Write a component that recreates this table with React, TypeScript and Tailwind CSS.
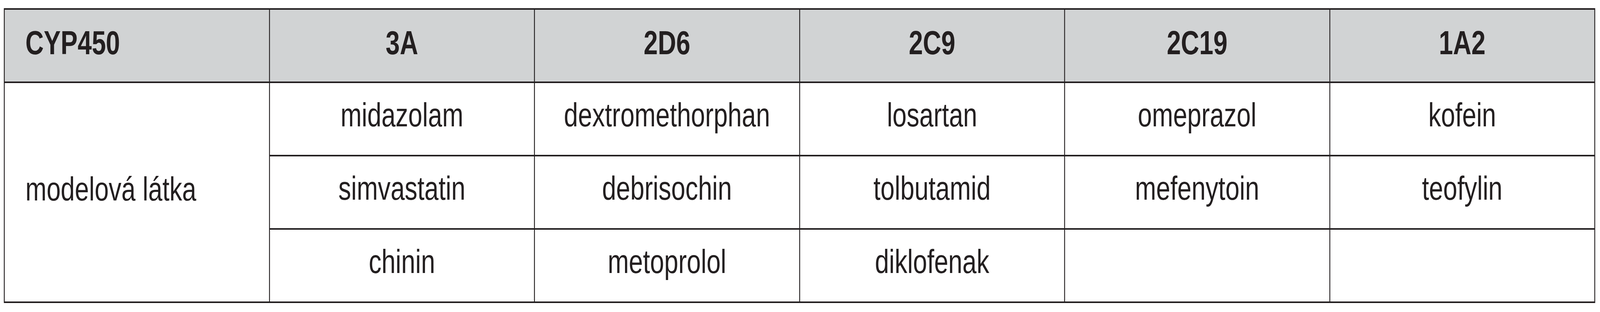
const headers = ["CYP450", "3A", "2D6", "2C9", "2C19", "1A2"];

const rows: string[][] = [
  ["midazolam", "dextromethorphan", "losartan", "omeprazol", "kofein"],
  ["simvastatin", "debrisochin", "tolbutamid", "mefenytoin", "teofylin"],
  ["chinin", "metoprolol", "diklofenak", "", ""],
];

// the sandbox window is 4096 wide, so the 5417-wide table is squeezed to fit it
export default function App() {
  return (
    <div className="h-[800px] w-screen overflow-hidden bg-white">
      <div className="h-[800px] w-[5417px] origin-top-left scale-x-[0.7561] pl-[13px] pt-[21px] font-['Liberation_Sans',Arial,sans-serif] text-[86px] text-[#231f20]">
        <div className="grid w-[5388px] grid-cols-6 grid-rows-[184px_184px_184px_184px] gap-x-[3px] gap-y-[4px] bg-[#231f20] px-[3px] py-[4px]">
          {headers.map((h, i) => (
            <div
              key={h}
              className={`flex items-center bg-[#d1d3d4] pb-[16px] font-bold ${
                i === 0 ? "justify-start pl-[70px]" : "justify-center"
              }`}
            >
              {h}
            </div>
          ))}

          <div className="row-span-3 flex items-center bg-white pb-[18px] pl-[70px]">
            modelová látka
          </div>

          {rows.map((row, r) =>
            row.map((cell, c) => (
              <div
                key={`${r}-${c}`}
                className="flex items-center justify-center bg-white pb-[22px]"
              >
                {cell}
              </div>
            ))
          )}
        </div>
      </div>
    </div>
  );
}
